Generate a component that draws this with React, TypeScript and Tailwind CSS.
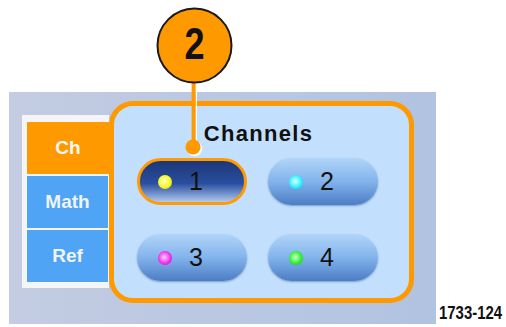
const tabs = [
  { label: "Ch", active: true },
  { label: "Math", active: false },
  { label: "Ref", active: false },
];

const channels = [
  { n: "1", dot: "bg-[radial-gradient(circle_at_45%_45%,#ffffd0,#f8f820_55%,#c8c800)]", selected: true },
  { n: "2", dot: "bg-[radial-gradient(circle_at_45%_45%,#e0ffff,#30f0ff_55%,#10b8d8)]", selected: false },
  { n: "3", dot: "bg-[radial-gradient(circle_at_45%_45%,#ffd0ff,#f030f0_55%,#b810c0)]", selected: false },
  { n: "4", dot: "bg-[radial-gradient(circle_at_45%_45%,#d0ffd0,#30f030_55%,#10b010)]", selected: false },
];

function ChannelButton({ n, dot, selected }: { n: string; dot: string; selected: boolean }) {
  return (
    <div
      className={
        selected
          ? "flex h-[47px] items-center gap-[17px] rounded-full border-[3px] border-[#ff9a00] bg-gradient-to-b from-[#1c3678] via-[#2a4f9e] via-55% to-[#b4c9ee] pl-[18px]"
          : "flex h-[47px] items-center gap-[17px] rounded-full bg-gradient-to-b from-[#b2d5f8] via-[#82b3ec] to-[#4d7dc4] pl-[21px] shadow-[0_1px_2px_rgba(40,70,130,0.45)]"
      }
    >
      <span className={`h-[14px] w-[14px] rounded-full ${dot}`} />
      <span className="text-[25px] leading-none text-[#111]">{n}</span>
    </div>
  );
}

export default function App() {
  return (
    <div className="relative h-[327px] w-[506px] overflow-hidden bg-white font-['Liberation_Sans',Arial,sans-serif]">
      <div className="flex items-end pl-[9px] pt-[92px]">
        <div className="flex h-[232px] w-[427px] shrink-0 items-start bg-gradient-to-r from-[#c3cce2] to-[#b1c3e1] pl-[13px]">
          {/* tab strip */}
          <div className="mt-[23px] flex flex-col gap-[2px] bg-[#f3f5f9] pb-[6px] pl-[5px] pr-[1px] pt-[7px]">
            {tabs.map((t) => (
              <div
                key={t.label}
                className={
                  t.active
                    ? "-mr-px flex h-[52px] w-[82px] items-center justify-center bg-[#ff9900] text-[19px] font-bold text-[#f8f8f8]"
                    : "flex h-[52px] w-[81px] items-center justify-center bg-[#4fa4f6] text-[19px] font-bold text-[#f0f4f8]"
                }
              >
                {t.label}
              </div>
            ))}
          </div>

          {/* channels panel */}
          <div className="mt-[9px] h-[202px] w-[305px] rounded-[24px] border-[5px] border-[#ff9900] bg-[#c2e0fd]">
            <div className="pr-[6px] pt-[15px] text-center text-[22px] font-bold leading-[26px] tracking-[1.3px] text-[#111]">
              Channels
            </div>
            <div className="mt-[11px] grid grid-cols-[110px_110px] gap-x-[21px] gap-y-[29px] pl-[23px]">
              {channels.map((c) => (
                <ChannelButton key={c.n} {...c} />
              ))}
            </div>
          </div>
        </div>
        <div className="mb-[2px] ml-[3px] origin-left scale-x-[0.83] whitespace-nowrap text-[18px] font-bold leading-none text-[#111]">
          1733-124
        </div>
      </div>

      {/* callout */}
      <svg className="pointer-events-none absolute left-0 top-0" width="506" height="327" viewBox="0 0 506 327">
        <rect x="195.5" y="82" width="1.4" height="65" fill="#ffffff" />
        <rect x="191.6" y="82" width="4" height="65" fill="#ff9900" />
        <circle cx="194.6" cy="148.6" r="7.6" fill="#ffffff" />
        <circle cx="193" cy="147" r="7.6" fill="#ff9900" />
        <circle cx="194.5" cy="45.5" r="37" fill="#ff9900" stroke="#1a1a1a" strokeWidth="2" />
        <text
          transform="translate(194.5 58.5) scale(0.82 1)"
          textAnchor="middle"
          fontSize="44"
          fontWeight="bold"
          fill="#111"
          fontFamily="'Liberation Sans',sans-serif"
        >
          2
        </text>
      </svg>
    </div>
  );
}
